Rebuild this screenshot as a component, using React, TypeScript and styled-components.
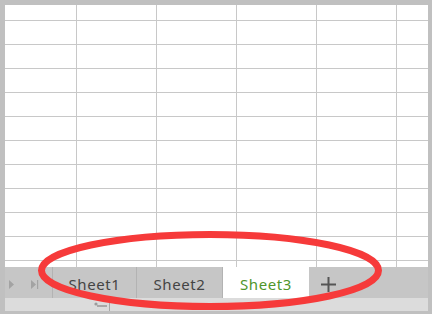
import React from "react";
import styled, { createGlobalStyle } from "styled-components";

const Global = createGlobalStyle`
  html, body { margin: 0; padding: 0; background: #ffffff; overflow: hidden; }
  * { box-sizing: border-box; }
`;

const Frame = styled.div`
  position: relative;
  width: 432px;
  height: 314px;
  background: #c0c0c0;
  padding: 5px 4px 3px 5px;
  display: flex;
  flex-direction: column;
  font-family: "Noto Sans", "Open Sans", sans-serif;
`;

const Grid = styled.div`
  flex: 1;
  background: #ffffff;
  display: grid;
  grid-template-columns: 72px repeat(4, 80px) 1fr;
  grid-template-rows: 16px repeat(10, 24px) 1fr;
  overflow: hidden;
`;

const Cell = styled.div<{ $lastCol?: boolean; $lastRow?: boolean }>`
  border-right: ${(p) => (p.$lastCol ? "none" : "1px solid #c8c8c8")};
  border-bottom: ${(p) => (p.$lastRow ? "none" : "1px solid #c8c8c8")};
`;

const TabBar = styled.div`
  height: 31px;
  flex: none;
  background: #c6c6c6;
  display: flex;
  align-items: stretch;
`;

const Nav = styled.div`
  width: 48px;
  display: flex;
  align-items: center;
  border-right: 1px solid #b3b3b3;
  padding-left: 4px;
`;

const NavButton = styled.span`
  width: 22px;
  height: 100%;
  display: flex;
  align-items: center;
  justify-content: flex-start;
  padding-top: 3px;
`;

const Tab = styled.div<{ $active?: boolean; $w: number }>`
  width: ${(p) => p.$w}px;
  display: flex;
  align-items: center;
  justify-content: center;
  padding-top: 2px;
  font-size: 15px;
  letter-spacing: 0.6px;
  color: ${(p) => (p.$active ? "#4f962b" : "#444444")};
  background: ${(p) => (p.$active ? "#ffffff" : "transparent")};
  border-right: ${(p) => (p.$active ? "none" : "1px solid #b3b3b3")};
`;

const AddTab = styled.div`
  width: 38px;
  display: flex;
  align-items: center;
  justify-content: center;
  padding-top: 3px;
`;

const Strip = styled.div`
  height: 13px;
  flex: none;
  background: #dcdcdc;
  display: flex;
  padding-left: 88px;
  align-items: flex-end;
`;

const Overlay = styled.svg`
  position: absolute;
  left: 0;
  top: 0;
  pointer-events: none;
`;

const rows = 12;
const cols = 6;

export default function App() {
  const cells: React.ReactNode[] = [];
  for (let r = 0; r < rows; r++) {
    for (let c = 0; c < cols; c++) {
      cells.push(
        <Cell key={`${r}-${c}`} $lastCol={c === cols - 1} $lastRow={r === rows - 1} />
      );
    }
  }
  return (
    <>
      <Global />
      <Frame>
        <Grid>{cells}</Grid>
        <TabBar>
          <Nav>
            <NavButton>
              <svg width="6" height="9" viewBox="0 0 6 9">
                <path d="M0 0 L5 4.5 L0 9 Z" fill="#a3a3a3" />
              </svg>
            </NavButton>
            <NavButton>
              <svg width="8" height="9" viewBox="0 0 8 9">
                <path d="M0 0 L5 4.5 L0 9 Z" fill="#a3a3a3" />
                <rect x="6" y="0" width="1.2" height="9" fill="#a3a3a3" />
              </svg>
            </NavButton>
          </Nav>
          <Tab $w={84}>Sheet1</Tab>
          <Tab $w={86}>Sheet2</Tab>
          <Tab $w={86} $active>
            Sheet3
          </Tab>
          <AddTab>
            <svg width="15" height="15" viewBox="0 0 15 15">
              <rect x="0" y="6.5" width="15" height="2" fill="#555555" />
              <rect x="6.5" y="0" width="2" height="15" fill="#555555" />
            </svg>
          </AddTab>
        </TabBar>
        <Strip>
          <svg width="22" height="9" viewBox="0 0 22 9">
            <circle cx="3" cy="2" r="1.6" fill="#9c9c9c" />
            <rect x="4" y="3" width="10" height="2" fill="#a8a8a8" />
            <rect x="16" y="1" width="1" height="8" fill="#a8a8a8" />
          </svg>
        </Strip>
        <Overlay width="432" height="314" viewBox="0 0 432 314">
          <ellipse
            cx="210"
            cy="270.5"
            rx="168.5"
            ry="36"
            fill="none"
            stroke="#f63a3a"
            strokeWidth="7"
          />
        </Overlay>
      </Frame>
    </>
  );
}
